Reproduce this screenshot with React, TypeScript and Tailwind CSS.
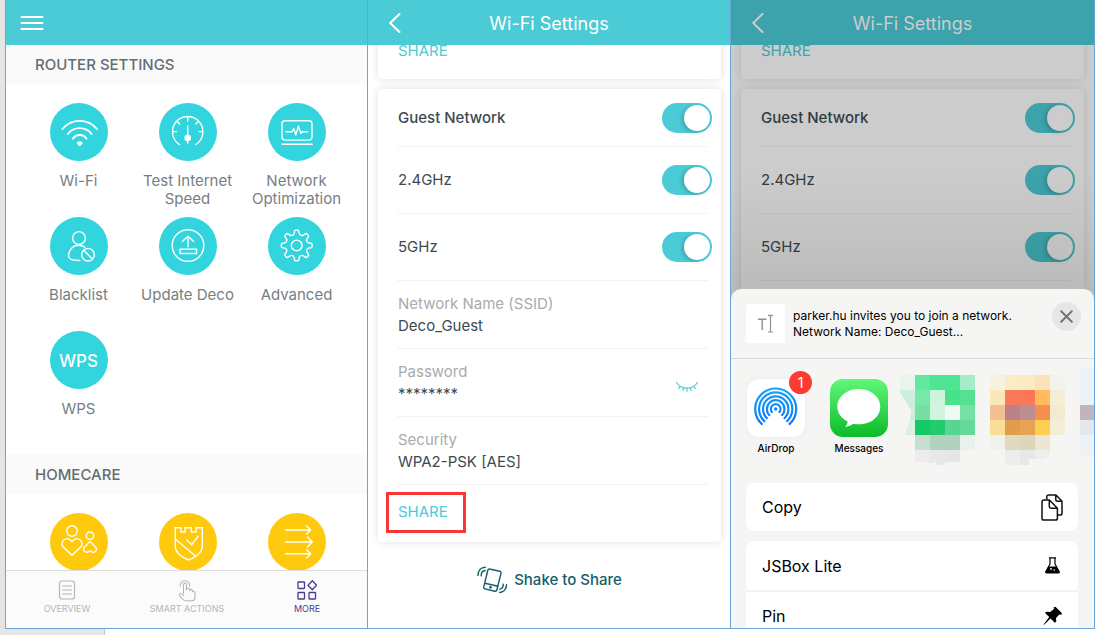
import { useId, type ReactNode } from "react";

function Glyph({ children, size = 58 }: { children: ReactNode; size?: number }) {
  return (
    <svg
      viewBox={`0 0 ${size} ${size}`}
      className="size-full"
      fill="none"
      stroke="#fff"
      strokeWidth="1.4"
      strokeLinecap="round"
      strokeLinejoin="round"
      aria-hidden="true"
    >
      {children}
    </svg>
  );
}

function polar(cx: number, cy: number, r: number, deg: number) {
  const a = (deg * Math.PI) / 180;
  return `${(cx + r * Math.cos(a)).toFixed(2)} ${(cy + r * Math.sin(a)).toFixed(2)}`;
}

function gearPath(cx: number, cy: number) {
  let d = "";
  for (let k = 0; k < 8; k++) {
    const t = k * 45;
    d += `${k === 0 ? "M" : "L"}${polar(cx, cy, 12.2, t - 12)} `;
    d += `L${polar(cx, cy, 14.4, t - 9)} Q${polar(cx, cy, 15.6, t - 7)} ${polar(cx, cy, 15.4, t - 3)} `;
    d += `L${polar(cx, cy, 15.4, t + 3)} Q${polar(cx, cy, 15.6, t + 7)} ${polar(cx, cy, 14.4, t + 9)} `;
    d += `L${polar(cx, cy, 12.2, t + 12)} Q${polar(cx, cy, 9.8, t + 22.5)} ${polar(cx, cy, 12.2, t + 33)} `;
  }
  return d + "Z";
}

const WifiGlyph = (
  <Glyph>
    <g strokeWidth="1.8">
      <path d="M12.5 26a22.3 22.3 0 0 1 34.4 0" />
      <path d="M17.8 31a15 15 0 0 1 23.8 0" />
      <path d="M22.9 35.8a8 8 0 0 1 13.6 0" />
    </g>
    <path d="M29.7 42.6l-2-2a.9.9 0 0 1 2-1 .9.9 0 0 1 2 1z" fill="#fff" />
  </Glyph>
);

const GaugeGlyph = (
  <Glyph>
    <path d="M20.6 41.6a15.2 15.2 0 1 1 16.2 0M28.7 14.2v4M13.6 28.6h3.8M40 28.6h3.8M18.2 18.6l2.4 2.4M39.2 18.6l-2.4 2.4" />
    <path d="M28.7 23v10" />
    <circle cx="28.7" cy="35" r="2.6" fill="#fff" />
    <path d="M28.7 37v3" />
  </Glyph>
);

const MonitorGlyph = (
  <Glyph>
    <rect x="14" y="17.8" width="30" height="19.3" rx="3" />
    <path d="M18 28.7h6l1.8-3 2 6.3 2.6-9 2.6 7.5 1-1.8h5.7M14 41.3h30.3" />
  </Glyph>
);

const BlacklistGlyph = (
  <Glyph>
    <circle cx="29" cy="21" r="6.4" />
    <path d="M34.8 30.2c-1.6-1.3-3.6-2-5.8-2-6.5 0-10.5 5-10.5 11 0 2.8 3.5 4.3 11.5 4.3" />
    <circle cx="38" cy="37.7" r="6.3" />
    <path d="M33.7 33.3l8.7 8.8" />
  </Glyph>
);

const UpdateGlyph = (
  <Glyph>
    <circle cx="29" cy="28.5" r="15.8" />
    <path d="M29 29.7V19.3M23.3 24.5l5.7-5.3 5.7 5.3M21 32.3h16.500v4.200H21z" strokeLinejoin="miter" />
  </Glyph>
);

const GearGlyph = (
  <Glyph>
    <path d={gearPath(28.7, 28.5)} />
    <circle cx="28.7" cy="28.5" r="5.4" />
  </Glyph>
);

const FamilyGlyph = (
  <Glyph>
    <circle cx="22" cy="18" r="5.3" />
    <path d="M22 42.3L13.3 34c-4.200-4.400 2.500-12.400 8.700-5.500 6.200-6.900 12.900 1.100 8.700 5.500z" />
    <circle cx="40" cy="22.7" r="3.7" />
    <path d="M40 28.5l5.500 5.500c3.200 3.800-2.300 7.200-5.500 3.600-3.200 3.600-8.700.2-5.500-3.600z" />
  </Glyph>
);

const ShieldGlyph = (
  <Glyph>
    <path d="M16.300 14.700H22V19h4v-4.300h6.300V19H37v-4.300h6.300v18.800c0 6.500-8.300 11.500-13.600 13.500-5.700-2-13.400-7-13.400-13.500zM16.300 26L36 42.700M27.700 27l5 4.700 6.600-8.400" strokeLinejoin="miter" />
  </Glyph>
);

const ArrowsGlyph = (
  <Glyph>
    <path d="M17.500 17h25M38.500 13l4.200 4-4.200 4M17.500 29h26.500M39.500 24l4.800 5-4.800 5M17.500 40.700h25M38.500 36.700l4.200 4-4.200 4" />
  </Glyph>
);

type Item = { label: ReactNode; icon: ReactNode };

const routerItems: Item[] = [
  { label: "Wi-Fi", icon: WifiGlyph },
  { label: "Test Internet Speed", icon: GaugeGlyph },
  { label: "Network Optimization", icon: MonitorGlyph },
  { label: "Blacklist", icon: BlacklistGlyph },
  { label: "Update Deco", icon: UpdateGlyph },
  { label: "Advanced", icon: GearGlyph },
  { label: "WPS", icon: <span className="pt-px text-[17px] font-medium">WPS</span> },
];

const careItems = [
  { name: "Parental controls", icon: FamilyGlyph },
  { name: "Antivirus", icon: ShieldGlyph },
  { name: "Quality of service", icon: ArrowsGlyph },
];

function SectionTitle({ children }: { children: ReactNode }) {
  return (
    <h2 className="flex h-[39px] items-center bg-[#fafafa] pt-px pl-[29px] text-[15px] font-medium text-[#636e73]">
      {children}
    </h2>
  );
}

function MoreScreen() {
  return (
    <section className="flex min-h-0 min-w-0 flex-col border-l border-[#6ba4d9] bg-white">
      <header className="flex h-[45px] shrink-0 items-center bg-[#4bcbd6] px-[14px] pt-px">
        <button type="button" aria-label="Menu">
          <svg width="24" height="16" viewBox="0 0 24 16" stroke="#fff" strokeWidth="2" strokeLinecap="round">
            <path d="M1.500 2h21M1.500 8h21M1.500 14h21" />
          </svg>
        </button>
      </header>
      <div className="min-h-0 flex-1 overflow-hidden">
        <SectionTitle>ROUTER SETTINGS</SectionTitle>
        <div className="grid grid-cols-3 gap-y-[10px] pt-[19px] pr-4 pb-5 pl-[18px]">
          {routerItems.map((it, i) => (
            <button
              type="button"
              key={i}
              className="flex h-[104px] flex-col items-center gap-[11px] text-[15px] leading-[18px] text-[#768084]"
            >
              <span className="flex size-[58px] shrink-0 items-center justify-center rounded-full bg-[#32d4dd] text-white">
                {it.icon}
              </span>
              <span>{it.label}</span>
            </button>
          ))}
        </div>
        <SectionTitle>HOMECARE</SectionTitle>
        <div className="grid grid-cols-3 pt-[19px] pr-4 pl-[18px]">
          {careItems.map((it) => (
            <button type="button" key={it.name} aria-label={it.name} className="flex justify-center">
              <span className="size-[58px] rounded-full bg-[#ffca0d]">{it.icon}</span>
            </button>
          ))}
        </div>
      </div>
      <nav className="grid h-[58px] shrink-0 grid-cols-3 border-t border-[#dedede] bg-[#fbfbfb] pt-[9px] pl-px text-[9px] leading-[12px] text-[#b4b6b8]">
        <a href="#overview" className="flex flex-col items-center gap-[3px]">
          <svg width="20" height="20" viewBox="0 0 20 20" fill="none" stroke="currentColor" strokeWidth="1.200" strokeLinecap="round">
            <rect x="2.500" y="1" width="15" height="18" rx="2.500" />
            <path d="M5.500 6h9M5.500 10h9M5.500 14h9" />
          </svg>
          OVERVIEW
        </a>
        <a href="#actions" className="flex flex-col items-center gap-[3px]">
          <svg width="20" height="22" viewBox="0 0 20 22" className="-mb-[2px]" fill="none" stroke="currentColor" strokeWidth="1.100" strokeLinecap="round" strokeLinejoin="round">
            <path d="M6.500 13.500V4.600a1.500 1.500 0 0 1 3 0V10M9.500 10V8.800c1-1 3-.6 3 .8v1.200M12.500 10.500v-.7c1-.8 2.800-.4 2.800.8v1M15.300 11.500c1-.7 2.700 0 2.700 1.300v4.700c0 2-1.500 3.300-3.300 3.300H8.500c-1.200 0-5-3.500-6-5-.8-1.300.6-2.700 2-1.900l2 1.700" />
            <path d="M3.300 6.200a4.700 4.700 0 1 1 9.300 0" />
          </svg>
          SMART ACTIONS
        </a>
        <a href="#more" aria-current="page" className="flex flex-col items-center gap-[3px] text-[#4b3a91]">
          <svg width="20" height="20" viewBox="0 0 20 20" fill="none" stroke="currentColor" strokeWidth="1.300">
            <rect x="1" y="2" width="6.500" height="6.500" rx=".5" />
            <rect x="1" y="12.500" width="6.500" height="6.500" rx=".5" />
            <rect x="12" y="12.500" width="6.500" height="6.500" rx=".5" />
            <path d="M15.300.7l4.300 4.500-4.300 4.500L11 5.200z" />
          </svg>
          MORE
        </a>
      </nav>
    </section>
  );
}

function SettingsHeader() {
  return (
    <header className="relative z-10 grid h-[45px] shrink-0 grid-cols-[53px_1fr_53px] items-center bg-[#4bcbd6] pt-px text-white">
      <button type="button" aria-label="Back" className="pl-[21px]">
        <svg width="12" height="20" viewBox="0 0 12 20" fill="none" stroke="#fff" strokeWidth="2" strokeLinecap="round" strokeLinejoin="round">
          <path d="M10.500 1L1.200 10l9.300 9" />
        </svg>
      </button>
      <h1 className="pt-px text-center text-[18px] leading-6 whitespace-nowrap">Wi-Fi Settings</h1>
    </header>
  );
}

function PreviousCard() {
  return (
    <div className="-mt-[10px] rounded-[4px] bg-white pb-3 pl-5 shadow-[0_0_8px_rgba(0,0,0,0.13)]">
      <button type="button" className="block h-8 text-[15px] text-[#4bcbd6]">
        SHARE
      </button>
    </div>
  );
}

function ToggleRow({ label, strong = false }: { label: string; strong?: boolean }) {
  const id = useId();
  return (
    <div
      className={
        "flex items-center justify-between border-b border-[#f3f3f3] pl-px " +
        (strong ? "h-[58px] font-medium" : "h-[67px]")
      }
    >
      <label htmlFor={id} className="pt-px">{label}</label>
      <input
        id={id}
        type="checkbox"
        role="switch"
        defaultChecked
        className="-mr-1 flex h-[30px] w-[50px] appearance-none items-center rounded-full bg-[#c9cdcf] px-[2px] before:size-[26px] before:rounded-full before:bg-white before:shadow-[-2px_1px_4px_rgba(0,0,0,0.2)] checked:justify-end checked:bg-[#4bcbd6]"
      />
    </div>
  );
}

function InfoRow({ label, value, action }: { label: string; value: string; action?: ReactNode }) {
  return (
    <div className="flex h-[68px] items-center justify-between border-b border-[#f3f3f3] pr-[9px] pl-px">
      <dl className="pt-px leading-[22px]">
        <dt className="text-[#a9abad]">{label}</dt>
        <dd>{value}</dd>
      </dl>
      {action}
    </div>
  );
}

function GuestToggles() {
  return (
    <>
      <ToggleRow label="Guest Network" strong />
      <ToggleRow label="2.4GHz" />
      <ToggleRow label="5GHz" />
    </>
  );
}

const cardClass = "mt-[10px] rounded-[4px] bg-white pr-[13px] pl-[19px] text-[15px] text-[#3c4a50] shadow-[0_0_8px_rgba(0,0,0,0.13)]";

function SettingsScreen() {
  return (
    <section className="flex min-h-0 min-w-0 flex-col border-l border-[#6ba4d9] bg-white">
      <SettingsHeader />
      <div className="min-h-0 flex-1 overflow-hidden pr-[9px] pl-[10px]">
        <PreviousCard />
        <div className={cardClass}>
          <GuestToggles />
          <InfoRow label="Network Name (SSID)" value="Deco_Guest" />
          <InfoRow
            label="Password"
            value="********"
            action={
              <button type="button" aria-label="Show password" className="pt-2">
                <svg width="24" height="12" viewBox="0 0 24 12" fill="none" stroke="#4bcbd6" strokeWidth="1.200" strokeLinecap="round">
                  <path d="M1.500 1.500C6.500 9 17.500 9 22.500 1.500M5 5.200L3.700 7.500M8.700 7L8 9.500M12 7.300v2.900M15.300 7l.7 2.500M19 5.200l1.300 2.300" />
                </svg>
              </button>
            }
          />
          <InfoRow label="Security" value="WPA2-PSK [AES]" />
          <div className="h-[57px] pt-[7px]">
            <button type="button" className="-ml-[11px] block h-[41px] w-20 border-[3px] border-[#fb3434] pl-[9px] text-left text-[#4bcbd6]">
              SHARE
            </button>
          </div>
        </div>
        <p className="flex items-center justify-center gap-[7px] pt-[24px] text-[15px] font-medium text-[#155d6b]">
          <svg width="30" height="28" viewBox="0 0 30 28" fill="none" stroke="currentColor" strokeWidth="1.400" strokeLinecap="round" strokeLinejoin="round" aria-hidden="true">
            <path d="M12.500 3l10.300 2.300c1 .2 1.500 1 1.200 2L19.800 24c-.2 1-1 1.400-2 1.200L8 22.900c-1-.2-1.500-1-1.200-2L10.900 4c.2-.8.8-1.200 1.600-1zM8 17.200l13 3.100" />
            <path d="M1 9.500C1 4.500 4 1.300 8.300 1.200M4.200 9.800c0-3 1.500-5 4-5.300M29.500 18.500c0 4.500-2.800 7.500-6.800 8M26.300 18.300c0 2.500-1.200 4.300-3.300 4.900" />
            <circle cx="13.500" cy="21.300" r=".7" fill="currentColor" />
          </svg>
          <span className="pt-px">Shake to Share</span>
        </p>
      </div>
    </section>
  );
}

function airdropArc(r: number) {
  return `M${polar(28.7, 30, r, 130)} A${r} ${r} 0 1 1 ${polar(28.7, 30, r, 50)}`;
}

/* Colours of the two pixelated app icons: [column, row, colour] on a 15px grid. */
const mosaic: [number, number, string][] = [
  [0, 0, "#eaf4ee"], [1, 0, "#63e8a0"], [2, 0, "#50e592"], [3, 0, "#50e592"], [4, 0, "#a5edc8"],
  [1, 1, "#76e8aa"], [2, 1, "#ccf4df"], [3, 1, "#48e28b"], [4, 1, "#57e093"],
  [1, 2, "#76e0a3"], [2, 2, "#d1f4e1"], [3, 2, "#eefbf3"], [4, 2, "#77e0a4"],
  [1, 3, "#17c964"], [2, 3, "#22cc6c"], [3, 3, "#57d591"], [4, 3, "#66d899"],
  [1, 4, "#c8ded3"], [2, 4, "#b0d3c0"], [3, 4, "#b0d3c0"], [4, 4, "#eaf0ec"],
  [1, 5, "#ececec"], [2, 5, "#e8e8e8"], [3, 5, "#e6e6e6"],
  [6, 0, "#f6f2e0"], [7, 0, "#faecc5"], [8, 0, "#faebc3"], [9, 0, "#fbe3b7"], [10, 0, "#f2f3ec"],
  [6, 1, "#f8e9b7"], [7, 1, "#fa795b"], [8, 1, "#fa7759"], [9, 1, "#ffbb5c"], [10, 1, "#f4edd8"],
  [6, 2, "#f3bf93"], [7, 2, "#b98385"], [8, 2, "#b98f92"], [9, 2, "#f58f50"], [10, 2, "#f3eacf"],
  [6, 3, "#f7df96"], [7, 3, "#e19d4c"], [8, 3, "#e8a253"], [9, 3, "#fdcf4f"], [10, 3, "#f4edd6"],
  [6, 4, "#f2f2ec"], [7, 4, "#e0dac2"], [8, 4, "#dcd7ba"], [9, 4, "#ede6d3"],
  [7, 5, "#eceeec"], [8, 5, "#e6e8e5"], [9, 5, "#eeeeec"],
];

function Mosaic() {
  return (
    <svg width="196" height="106" viewBox="0 0 196 106" shapeRendering="crispEdges" role="img" aria-label="Pixelated apps">
      <path d="M0 26h16v30H11l1-10L7 38z" fill="#cdeedd" />
      <path d="M11 56h5v15H6z" fill="#dcf0e5" />
      {mosaic.map(([c, r, fill]) => (
        <rect key={`${c}-${r}`} x={1 + c * 15} y={11 + r * 15} width="15" height="15" fill={fill} />
      ))}
      <path d="M16 98h10v3H16zM26 99h10v2H26zM46 98h15v3H46zM36 96h1v5h-1z" fill="#f5f6f4" />
      <path d="M130 96h6v5h-6zM130 95h15l6-4v10h-21z" fill="#f5f6f4" />
      <path d="M181 4h15v88h-15z" fill="#ecf1f5" />
      <path d="M181 41h15v15h-15z" fill="#c1b5bd" />
      <path d="M181 56h15v15h-15z" fill="#e3e8ec" />
    </svg>
  );
}

function ShareSheet() {
  return (
    <div
      role="dialog"
      aria-label="Share"
      className="absolute inset-x-0 top-[289px] bottom-0 z-20 flex flex-col overflow-hidden rounded-t-[10px] bg-[#f5f6f4] text-black"
    >
      <div className="flex h-[70px] shrink-0 items-start border-b border-[#d8dad9] pt-[15px] pr-[13px] pl-[15px]">
        <svg width="39" height="39" viewBox="0 0 39 39" className="shrink-0 rounded-[4px] bg-white" fill="none" stroke="#8e8e8e" aria-hidden="true">
          <path d="M12 15.300h8.500M16.200 15.300V26" strokeWidth="1.400" />
          <path d="M22 11.300h5M22 28h5M24.500 11.300V28" strokeWidth="1.200" />
        </svg>
        <p className="ml-2 flex-1 pt-1 text-[12px] leading-[16px] whitespace-nowrap">
          parker.hu invites you to join a network.
          <br />
          Network Name: Deco_Guest...
        </p>
        <button type="button" aria-label="Close" className="-mt-[2px] flex size-[29px] shrink-0 items-center justify-center rounded-full bg-[#e5e7e6]">
          <svg width="13" height="13" viewBox="0 0 13 13" stroke="#747676" strokeWidth="2" strokeLinecap="round">
            <path d="M1.200 1.200l10.600 10.600M11.800 1.200L1.200 11.800" />
          </svg>
        </button>
      </div>

      <div className="flex h-[124px] shrink-0 overflow-hidden pl-4 text-[10px] leading-[13px] font-medium">
        <button type="button" className="relative mt-5 flex w-[58px] shrink-0 flex-col items-center gap-[5px] self-start">
          <svg width="58" height="58" viewBox="0 0 58 58" className="rounded-[13px] bg-white shadow-[0_0_8px_rgba(0,0,0,0.04)]" fill="none" aria-hidden="true">
            <defs>
              <linearGradient id="airdrop" x1="0" y1="8" x2="0" y2="50" gradientUnits="userSpaceOnUse">
                <stop stopColor="#15a5fb" />
                <stop offset="1" stopColor="#0a73f5" />
              </linearGradient>
            </defs>
            <g stroke="url(#airdrop)" strokeWidth="2.200">
              {[20.5, 16.6, 12.7, 8.8, 4.9].map((r) => (
                <path key={r} d={airdropArc(r)} />
              ))}
            </g>
            <circle cx="28.7" cy="30" r="1.800" fill="#0d8bf8" />
          </svg>
          AirDrop
          <span className="absolute -top-2 -right-[7px] flex size-[23px] items-center justify-center rounded-full bg-[#fc3b31] text-[14px] font-normal text-white">
            1
          </span>
        </button>
        <button type="button" className="mt-5 ml-[25px] flex w-[58px] shrink-0 flex-col items-center gap-[5px] self-start">
          <svg width="58" height="58" viewBox="0 0 58 58" className="rounded-[13px]" aria-hidden="true">
            <defs>
              <linearGradient id="messages" x1="0" y1="0" x2="0" y2="1">
                <stop stopColor="#60f879" />
                <stop offset="1" stopColor="#0cbb27" />
              </linearGradient>
            </defs>
            <rect width="58" height="58" fill="url(#messages)" />
            <path fill="#fff" d="M28.800 10C40.700 10 50.300 17.800 50.300 27.700S40.700 45.300 28.800 45.300c-2 0-3.900-.2-5.700-.6-1.800 1.600-4.800 3-8 3 1.500-1.500 2.400-3.300 2.500-5.200C11.300 39.300 7.300 34 7.300 27.700 7.300 17.800 16.900 10 28.800 10z" />
          </svg>
          Messages
        </button>
        <div className="mt-[5px] ml-[11px] shrink-0">
          <Mosaic />
        </div>
      </div>

      <div className="flex min-h-0 flex-1 flex-col gap-[10px] pr-4 pl-[15px] text-[16px]">
        <button type="button" className="flex h-[48px] shrink-0 items-center justify-between rounded-[9px] bg-white pr-[15px] pl-4">
          Copy
          <svg width="22" height="27" viewBox="0 0 22 27" fill="none" stroke="#111" strokeWidth="1.500" strokeLinejoin="round" aria-hidden="true">
            <path d="M5.800 5.500V2.800c0-1.100.7-1.800 1.800-1.800H15l6 6.200v12c0 1.100-.7 1.800-1.800 1.800h-2.600M14.800 1v4.700c0 .9.5 1.500 1.500 1.500H21" />
            <path d="M1 7.800C1 6.700 1.700 6 2.800 6h5.600l8 8.200v10c0 1.100-.7 1.800-1.800 1.800H2.800C1.700 26 1 25.300 1 24.200zM8.300 6v6.500c0 1.100.6 1.700 1.700 1.700h6.400" />
          </svg>
        </button>
        <div className="flex min-h-0 flex-1 flex-col overflow-hidden rounded-t-[9px] bg-white">
          <button type="button" className="flex h-[51px] shrink-0 items-center justify-between border-b-2 border-[#f3f4f3] pr-[18px] pl-4">
            JSBox Lite
            <svg width="15" height="17" viewBox="0 0 15 17" fill="none" stroke="#000" strokeWidth="1.200" strokeLinejoin="round" aria-hidden="true">
              <path d="M4 .8h7M5 1v6L.9 14.500c-.4.8 0 1.500.9 1.500h11.400c.9 0 1.300-.7.9-1.500L10 7V1" />
              <path d="M3.700 10h7.600l2.800 5.500H.9z" fill="#000" />
              <circle cx="6" cy="12" r=".9" fill="#fff" stroke="none" />
              <circle cx="9.300" cy="13" r=".8" fill="#fff" stroke="none" />
            </svg>
          </button>
          <button type="button" className="flex h-[48px] shrink-0 items-center justify-between pr-[15px] pl-4">
            Pin
            <svg width="20" height="20" viewBox="0 0 20 20" aria-hidden="true">
              <path d="M12.400.7L19 7.200l-.7 1.500-2-.2-3.300 3.600.3 3.500-1.400 1.200-4.400-4.200-6.300 6.200-.6-.4L6.200 11 2.100 7l1-1.300 4 .3L11 3l-.4-1.700z" />
            </svg>
          </button>
        </div>
      </div>
    </div>
  );
}

function ShareScreen() {
  return (
    <section className="relative flex min-h-0 min-w-0 flex-col overflow-hidden border-x border-[#6ba4d9] bg-white">
      <SettingsHeader />
      <div className="flex min-h-0 flex-1 flex-col overflow-hidden pr-[10px] pl-[10px]">
        <PreviousCard />
        <div className={cardClass + " flex-1"}>
          <GuestToggles />
        </div>
      </div>
      <div className="absolute inset-0 z-10 bg-black/20" />
      <div className="absolute inset-x-0 top-[170px] z-10 h-[130px] bg-linear-to-b from-transparent to-[#101800]/10" />
      <ShareSheet />
    </section>
  );
}

export default function App() {
  return (
    <main className="flex h-screen flex-col overflow-hidden bg-white font-['Inter','Liberation_Sans',sans-serif]">
      <div className="flex min-h-0 flex-1">
        <div className="w-[5px] shrink-0 bg-[#e5e5e5]" />
        <div className="grid min-w-0 flex-1 grid-cols-[362fr_363fr_365fr] grid-rows-[minmax(0,1fr)] border-b border-[#6ba4d9]">
          <MoreScreen />
          <SettingsScreen />
          <ShareScreen />
        </div>
        <div className="w-[6px] shrink-0" />
      </div>
      <div className="h-[6px] w-[105px] border-r border-[#c4c4c4] bg-[#e5e5e5]" />
    </main>
  );
}
